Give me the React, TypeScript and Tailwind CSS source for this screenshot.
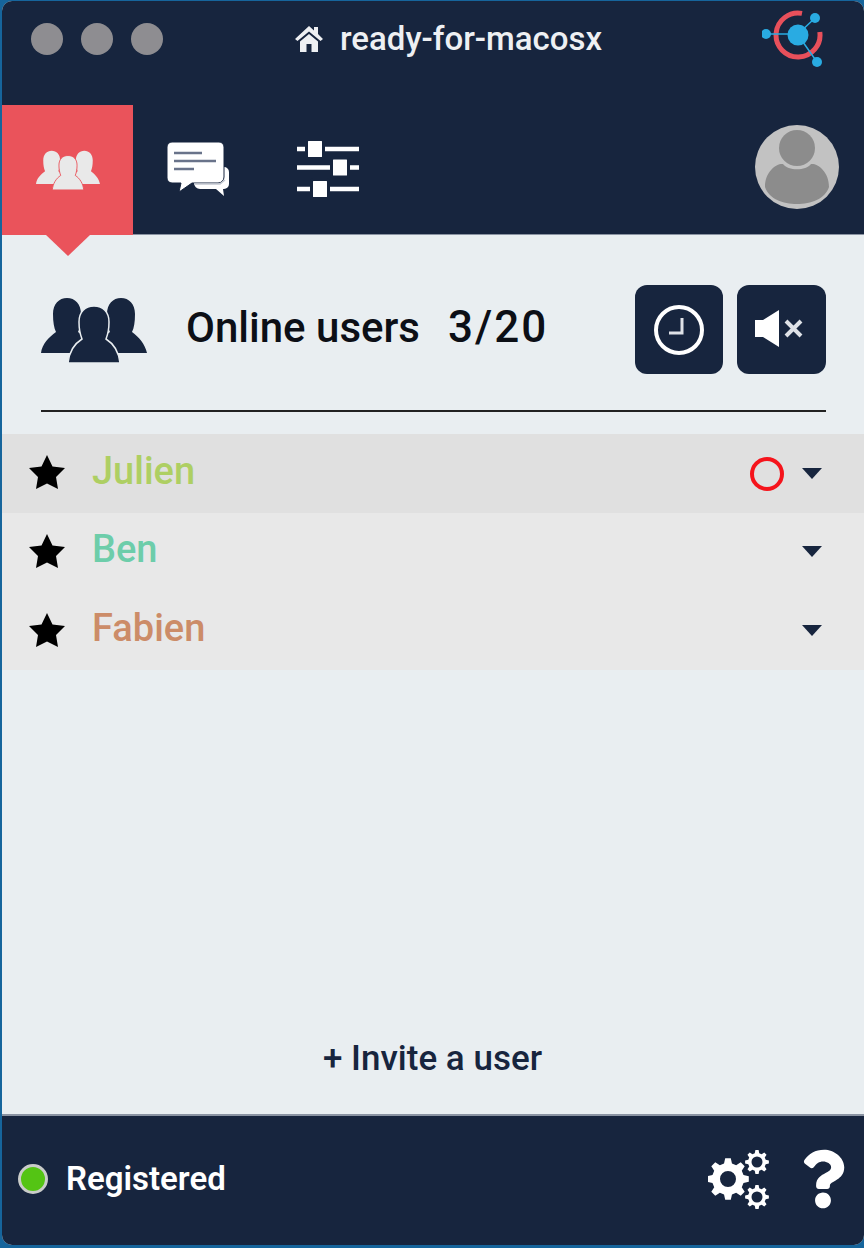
import { FaQuestion } from "react-icons/fa"

function People({ className, fill, edge }: { className: string; fill: string; edge: string }) {
  const side = "M0 56C1 47 8 40 15 35C13 31 12 25 12 17C12 7 18 1 26 1C34 1 40 7 40 17C40 25 39 31 37 35C44 40 50 47 52 56Z"
  return (
    <svg viewBox="0 0 106 66" className={className}>
      <path d={side} fill={fill} />
      <path d={side} fill={fill} transform="translate(54 0)" />
      <path
        d="M27 66C28 56 33 47 41 42C39 37 38 32 38 25C38 15 44 9 53 9C62 9 68 15 68 25C68 32 67 37 65 42C73 47 78 56 79 66Z"
        fill={fill}
        stroke={edge}
        strokeWidth="1.5"
      />
    </svg>
  )
}

function HomeIcon() {
  return (
    <svg viewBox="0 0 28 26" className="h-[26px] w-[28px]" fill="currentColor">
      <path d="M14 0L19 4.5V1H23V8L28 13L25.5 15L14 5.5L2.5 15L0 13Z" />
      <path d="M5 15.5L14 8L23 15.5V26H16.5V18H11.5V26H5Z" />
    </svg>
  )
}

function ChatIcon() {
  return (
    <svg viewBox="0 0 64 56" className="h-[56px] w-[64px]">
      <path d="M46 26h12a5 5 0 0 1 5 5v12a5 5 0 0 1-5 5h-1l1 7-8-7H34a6 6 0 0 1-6-6V33z" fill="#fff" />
      <path
        d="M6 1h47a5 5 0 0 1 5 5v30a6 6 0 0 1-6 6H26L13 51l2-9H6a5 5 0 0 1-5-5V6a5 5 0 0 1 5-5z"
        fill="#fff"
        stroke="#17253e"
        strokeWidth="1"
      />
      <path d="M8 12h28M8 20h42M8 28h20" stroke="#69738a" strokeWidth="2.5" />
      <path d="M28 43h26l5-4" fill="none" stroke="#c3c8d1" strokeWidth="1.5" />
    </svg>
  )
}

function SliderIcon() {
  return (
    <svg viewBox="0 0 62 56" className="h-[56px] w-[62px]" fill="#fff">
      <path d="M0 8h62M0 26.500h62M0 48h62" stroke="#fff" strokeWidth="4.5" />
      <g stroke="#17253e" strokeWidth="3">
        <rect x="9.500" y="-1.500" width="17" height="19" rx="2" />
        <rect x="34.500" y="17" width="17" height="19" rx="2" />
        <rect x="14.500" y="38.500" width="17" height="19" rx="2" />
      </g>
    </svg>
  )
}

function Logo() {
  return (
    <svg viewBox="0 0 64 60" className="h-[60px] w-[64px]">
      <path d="M40 3.400A22 22 0 1 0 57.800 22" fill="none" stroke="#e8505b" strokeWidth="5" />
      <path d="M4 24H36L53 8M36 25L55 52" stroke="#29abe2" strokeWidth="1.5" fill="none" />
      <circle cx="36" cy="25" r="10.500" fill="#29abe2" />
      <circle cx="4" cy="24" r="5" fill="#29abe2" />
      <circle cx="53" cy="8" r="5" fill="#29abe2" />
      <circle cx="55" cy="52" r="5" fill="#29abe2" />
    </svg>
  )
}

function Avatar() {
  return (
    <div className="h-[84px] w-[84px] overflow-hidden rounded-full bg-[#c2c2c2]">
      <svg viewBox="0 0 84 84" className="h-full w-full">
        <circle cx="42" cy="23" r="18" fill="#8c8c8c" />
        <path d="M10 62C10 46 22 38 28 39C33 46 51 46 56 39C62 38 74 46 74 62C70 74 56 79 42 79C28 79 14 74 10 62Z" fill="#8c8c8c" />
      </svg>
    </div>
  )
}

function gearPath(cx: number, cy: number, outer: number, inner: number, hole: number) {
  const teeth = 8
  const points: string[] = []
  for (let i = 0; i < teeth; i++) {
    const a = (i / teeth) * Math.PI * 2
    const step = (Math.PI * 2) / teeth
    const corners: [number, number][] = [
      [a - step * 0.32, inner],
      [a - step * 0.17, outer],
      [a + step * 0.17, outer],
      [a + step * 0.32, inner],
    ]
    for (const [t, r] of corners) {
      points.push(`${(cx + Math.cos(t) * r).toFixed(2)} ${(cy + Math.sin(t) * r).toFixed(2)}`)
    }
  }
  return `M${points.join("L")}ZM${cx + hole} ${cy}a${hole} ${hole} 0 1 0 ${-hole * 2} 0a${hole} ${hole} 0 1 0 ${hole * 2} 0Z`
}

function GearsIcon() {
  return (
    <svg viewBox="0 0 62 62" className="h-[62px] w-[62px]" fill="#fff" fillRule="evenodd">
      <path d={gearPath(20, 31, 21, 16, 8)} />
      <path d={gearPath(49, 14, 12, 9, 5.500)} />
      <path d={gearPath(49, 49, 12, 9, 5.500)} />
    </svg>
  )
}

function Star() {
  return (
    <svg viewBox="0 0 36 34" className="mb-[2px] h-[34px] w-[36px] shrink-0" fill="#000">
      <path d="M18 0L23.500 11.500L36 13L27 22L29 34L18 28.500L7 34L9 22L0 13L12.500 11.500Z" />
    </svg>
  )
}

function Caret() {
  return <div className="h-0 w-0 border-x-[10px] border-t-[11px] border-x-transparent border-t-[#17253e]" />
}

const users = [
  { name: "Julien", color: "text-[#aecf63]", bg: "bg-[#e0e0e0]", recording: true },
  { name: "Ben", color: "text-[#6dcdaa]", bg: "bg-[#e8e8e8]", recording: false },
  { name: "Fabien", color: "text-[#cc8c68]", bg: "bg-[#e8e8e8]", recording: false },
]

export default function App() {
  return (
    <div className="h-[1248px] w-[864px] bg-[#16659c] pl-[2px] pt-px pb-[3px] font-['Roboto',sans-serif]">
      <div className="flex h-full flex-col overflow-hidden rounded-[10px] bg-[#e9eef1]">
        <header className="h-[234px] shrink-0 border-b border-[#8a93a2] bg-[#17253e]">
          <div className="flex h-[104px] items-start">
            <div className="flex gap-[18px] pl-[29px] pt-[22px]">
              <span className="h-[32px] w-[32px] rounded-full bg-[#8e8d91]" />
              <span className="h-[32px] w-[32px] rounded-full bg-[#8e8d91]" />
              <span className="h-[32px] w-[32px] rounded-full bg-[#8e8d91]" />
            </div>
            <div className="ml-[132px] flex items-center pt-[16px] text-[#eef0f3]">
              <HomeIcon />
              <span className="ml-[17px] text-[33px] leading-[44px] font-medium">ready-for-macosx</span>
            </div>
            <div className="ml-auto pr-[38px] pt-[9px]">
              <Logo />
            </div>
          </div>
          <nav className="flex h-[129px] items-center">
            <div className="relative flex h-[130px] w-[131px] items-center justify-center bg-[#ea535b]">
              <People className="h-[40px] w-[64px]" fill="#e9e9e9" edge="#ea535b" />
              <div className="absolute top-full left-[44px] z-10 h-0 w-0 border-x-[22px] border-t-[21px] border-x-transparent border-t-[#ea535b]" />
            </div>
            <div className="mb-[2px] ml-[33px]">
              <ChatIcon />
            </div>
            <div className="mb-[2px] ml-[67px]">
              <SliderIcon />
            </div>
            <div className="mb-[6px] ml-auto pr-[25px]">
              <Avatar />
            </div>
          </nav>
        </header>

        <main className="flex min-h-0 flex-1 flex-col">
          <div className="flex shrink-0 flex-col pl-[39px] pr-[38px] pt-[50px]">
            <div className="flex h-[89px] items-center">
              <People className="h-[66px] w-[106px]" fill="#17253e" edge="#e9eef1" />
              <h1 className="ml-[39px] -mt-[5px] text-[42px] font-medium text-[#0c0f16]">Online users</h1>
              <span className="ml-[28px] -mt-[5px] text-[44px] font-medium tracking-[2px] text-[#0c0f16]">3/20</span>
              <div className="ml-auto flex gap-[14px]">
                <button className="flex h-[89px] w-[88px] items-center justify-center rounded-[12px] bg-[#17253e]">
                  <svg viewBox="0 0 50 50" className="h-[50px] w-[50px]" fill="none" stroke="#fff">
                    <circle cx="25" cy="25" r="23" strokeWidth="4" />
                    <path d="M28 13V28H15" strokeWidth="3" stroke="#dfe2e7" />
                  </svg>
                </button>
                <button className="flex h-[89px] w-[89px] items-center justify-center rounded-[12px] bg-[#17253e]">
                  <svg viewBox="0 0 48 37" className="mr-[5px] mb-[3px] h-[37px] w-[48px]">
                    <path d="M0 10H8L24 0V37L8 27H0Z" fill="#fff" />
                    <path d="M31 11L46 26M46 11L31 26" stroke="#dfe2e7" strokeWidth="4" />
                  </svg>
                </button>
              </div>
            </div>
            <div className="mt-[36px] h-[2px] shrink-0 bg-[#222]" />
          </div>

          <ul className="mt-[22px]">
            {users.map((user) => (
              <li key={user.name} className={`flex h-[78.67px] items-center pl-[27px] pr-[42px] ${user.bg}`}>
                <Star />
                <span className={`ml-[27px] -mt-[4px] text-[38px] font-medium ${user.color}`}>{user.name}</span>
                {user.recording && (
                  <span className="ml-auto mt-[1px] h-[34px] w-[34px] rounded-full border-[4px] border-[#f5141c]" />
                )}
                <span className={user.recording ? "ml-[18px]" : "ml-auto"}>
                  <Caret />
                </span>
              </li>
            ))}
          </ul>

          <div className="mt-auto flex shrink-0 justify-center pb-[29px] text-[#17253e]">
            <span className="ml-[-1px] text-[35px] font-medium">+ Invite a user</span>
          </div>
        </main>

        <footer className="flex h-[131px] shrink-0 items-center border-t-2 border-[#8a93a2] bg-[#17253e] pb-[3px] pl-[16px] pr-[19px]">
          <span className="h-[30px] w-[30px] rounded-full border-[3px] border-[#c9ccc9] bg-[#54c414]" />
          <span className="ml-[18px] text-[33px] font-semibold text-white">Registered</span>
          <span className="ml-auto">
            <GearsIcon />
          </span>
          <FaQuestion className="ml-[31px] h-[60px] w-[44px] text-white" />
        </footer>
      </div>
    </div>
  )
}
